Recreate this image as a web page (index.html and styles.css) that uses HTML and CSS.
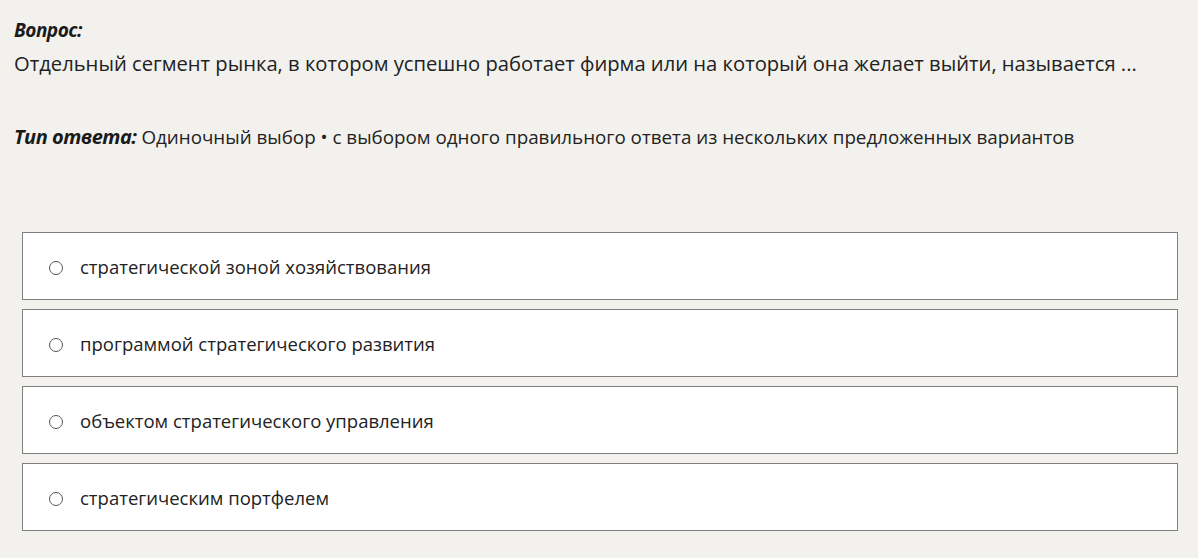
FILE: index.html
```html
<!doctype html>
<html lang="ru">
<head>
  <meta charset="utf-8"/>
  <title>Вопрос</title>
  <link rel="stylesheet" href="styles.css">
</head>
<body>
  <div class="quiz">
    <div class="label">Вопрос:</div>
    <div class="question">Отдельный сегмент рынка, в котором успешно работает фирма или на который она желает выйти, называется ...</div>

    <div class="type"><span class="label">Тип ответа:</span> Одиночный выбор • с выбором одного правильного ответа из нескольких предложенных вариантов</div>

    <ul class="options">
      <li class="option"><span class="radio"></span>стратегической зоной хозяйствования</li>
      <li class="option"><span class="radio"></span>программой стратегического развития</li>
      <li class="option"><span class="radio"></span>объектом стратегического управления</li>
      <li class="option"><span class="radio"></span>стратегическим портфелем</li>
    </ul>
  </div>
</body>
</html>
```

FILE: styles.css
```css
*{box-sizing:border-box;margin:0;padding:0}
html,body{height:100%;overflow:hidden}
body{background:#f2f1ed;color:#222;font-family:"Open Sans",Arial,sans-serif}

.quiz{padding:17px 20px 0 14px}
.label{font-weight:700;font-style:italic;font-size:19px;letter-spacing:-.5px;color:#1a1a1a}
.question{font-size:20.2px;line-height:28px;margin-top:6px}

.type{font-size:18.8px;margin-top:47px;line-height:26px}
.type .label{font-size:20px}

.options{list-style:none;margin:82px 0 0 8px;display:flex;flex-direction:column;gap:9px}
.option{
  height:68px;
  display:flex;
  align-items:center;
  gap:17px;
  padding-left:26px;
  background:#fff;
  border:1px solid #7f7f7f;
  font-size:18.5px;
  color:#222;
}
.radio{
  width:14px;
  height:14px;
  margin-top:3px;
  border:1px solid #555;
  border-radius:50%;
  flex-shrink:0;
}
```
